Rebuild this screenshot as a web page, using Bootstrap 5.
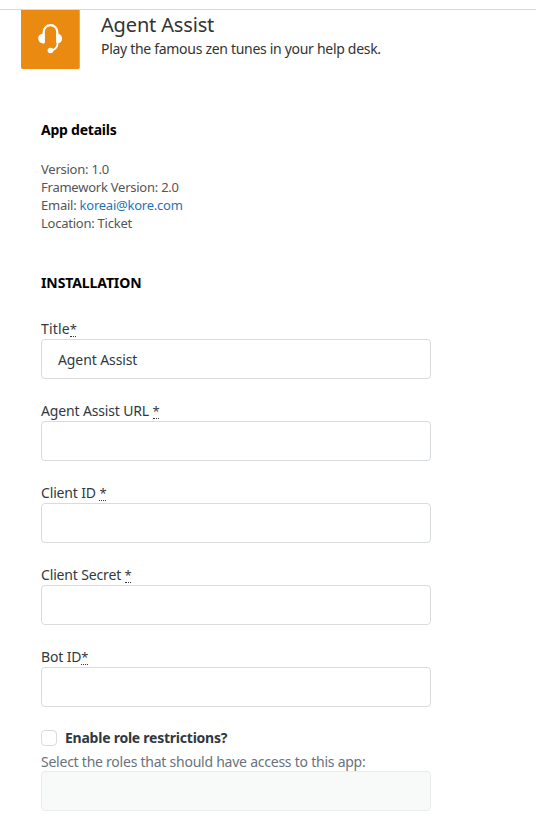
<!DOCTYPE html>
<html lang="en">
<head>
<meta charset="utf-8">
<meta name="viewport" content="width=device-width, initial-scale=1">
<title>Agent Assist</title>
<link href="https://cdn.jsdelivr.net/npm/bootstrap@5.3.0/dist/css/bootstrap.min.css" rel="stylesheet">
<style>
body{font-family:"Noto Sans",sans-serif;font-size:14px;line-height:20px;color:#2f3941;height:825px;overflow:hidden;background:#fff}
.top-rule{height:10px;border-bottom:1px solid #d8d8d8}
.app-head{padding-left:21px;gap:21px;height:59px;color:#333}
.app-logo{width:59px;height:59px;background:#ea8a10;border-radius:0 0 2px 2px;border-right:1px solid #f0a84c}
.app-name{font-size:20px;line-height:26px;padding:2px 0 1px;letter-spacing:-.16px;font-weight:400}
.app-tag{letter-spacing:-.3px;line-height:20px}
.main-col{width:431px;padding:51px 0 0 41px}
.sect{font-size:14px;line-height:20px;font-weight:700;color:#000;letter-spacing:-.23px;margin:0}
.sect-caps{letter-spacing:-.1px;margin-bottom:26px}
.details{font-size:13px;line-height:18px;color:#555;letter-spacing:-.24px;margin:20px 0 41px}
.details a{color:#1f73b7}
.field{margin-bottom:22px}
.field label{display:block;height:20px;letter-spacing:-.15px}
.field .label-title{letter-spacing:.15px}
.form-control{height:40px;border:1px solid #d8dcde;border-radius:4px;padding:0 16px;font-size:14px;color:#2f3941;letter-spacing:-.1px}
.form-control:disabled{background:#f8f9f9;border-color:#e9ebed}
abbr[title]{cursor:help;text-decoration:none;border-bottom:1px dotted #2f3941;display:inline-block;font-size:13px;letter-spacing:-1px;line-height:16px;height:16px;vertical-align:top;margin-top:2px}
.form-check-input{width:16px;height:16px;border:1px solid #d8dcde;border-radius:4px!important;margin:0}
.role-row{margin-top:-1px}
.role-label{font-weight:700;letter-spacing:-.24px}
.role-hint{color:#68737d;letter-spacing:-.24px;height:19px;line-height:20px;margin-top:4px}
</style>
</head>
<body>
<div class="top-rule"></div>
<header class="app-head d-flex">
  <div class="app-logo flex-shrink-0">
    <svg class="d-block" width="58" height="59" viewBox="0 0 58 59" fill="none" stroke="#fff" stroke-linecap="round">
      <path d="M22.700 32V22.500C22.700 12.700 36.300 12.700 36.300 22.500V32" stroke-width="2.300"/>
      <path d="M36.500 34C36.200 37.500 34 39.500 30.500 40.500" stroke-width="1.800"/>
      <path d="M23.500 23.800V33.200C20 34 17.300 32 17.200 28.500C17.200 25.200 19.800 23.300 23.500 23.800ZM35.500 23.800V33.200C38.800 34 41 32 41.100 28.500C41.100 25.200 38.500 23.300 35.500 23.800Z" fill="#fff" stroke="none"/>
      <ellipse cx="29.500" cy="40.500" rx="2.900" ry="2.700" fill="#fff" stroke="none"/>
    </svg>
  </div>
  <div>
    <h1 class="app-name mb-0">Agent Assist</h1>
    <div class="app-tag">Play the famous zen tunes in your help desk.</div>
  </div>
</header>
<main class="main-col">
  <section>
    <h2 class="sect">App details</h2>
    <div class="details">
      <div>Version: 1.0</div>
      <div>Framework Version: 2.0</div>
      <div>Email: <a class="text-decoration-none" href="#">koreai@kore.com</a></div>
      <div>Location: Ticket</div>
    </div>
  </section>
  <form>
    <h2 class="sect sect-caps">INSTALLATION</h2>
    <div class="field"><label class="label-title" for="f1">Title<abbr title="required">*</abbr></label><input id="f1" class="form-control" value="Agent Assist"></div>
    <div class="field"><label for="f2">Agent Assist URL <abbr title="required">*</abbr></label><input id="f2" class="form-control"></div>
    <div class="field"><label for="f3">Client ID <abbr title="required">*</abbr></label><input id="f3" class="form-control"></div>
    <div class="field"><label for="f4">Client Secret <abbr title="required">*</abbr></label><input id="f4" class="form-control"></div>
    <div class="field"><label for="f5">Bot ID<abbr title="required">*</abbr></label><input id="f5" class="form-control"></div>
    <div class="role-row d-flex align-items-center gap-2">
      <input id="roles" type="checkbox" class="form-check-input"><label class="role-label" for="roles">Enable role restrictions?</label>
    </div>
    <div class="role-hint">Select the roles that should have access to this app:</div>
    <input class="form-control" aria-label="Roles" disabled>
  </form>
</main>
<script src="https://cdn.jsdelivr.net/npm/bootstrap@5.3.0/dist/js/bootstrap.bundle.min.js"></script>
</body>
</html>
